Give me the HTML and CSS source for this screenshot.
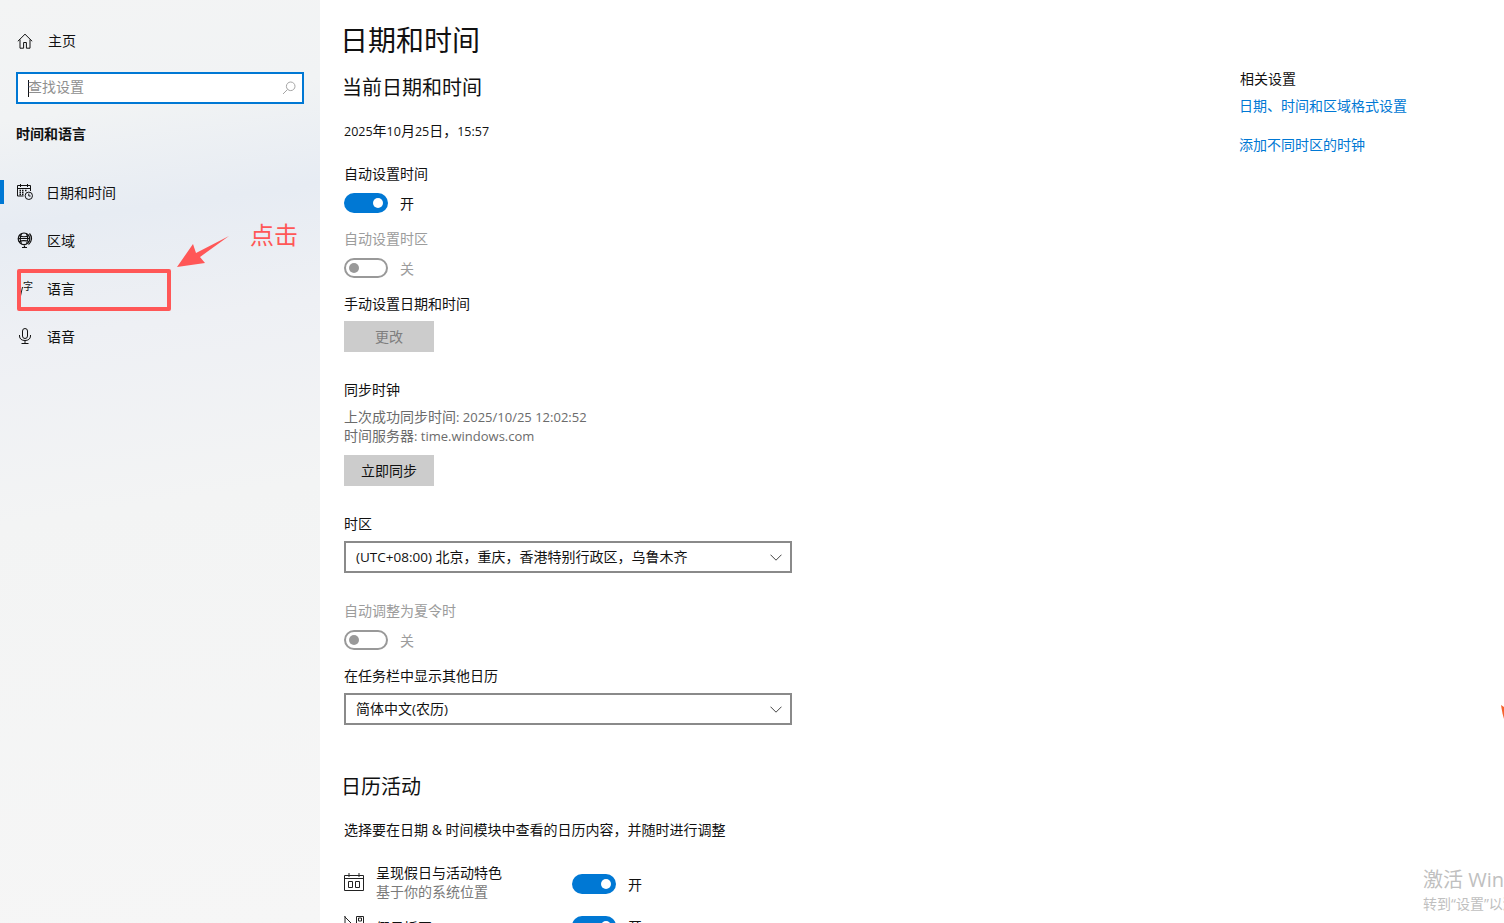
FILE: index.html
```html
<!DOCTYPE html>
<html lang="zh-CN">
<head>
    <meta charset="UTF-8">
    <title>日期和时间</title>
    <link rel="stylesheet" href="styles.css">
</head>
<body>
    <aside class="sidebar">
        <div class="home-row">
            <svg class="icon" viewBox="0 0 16 16"><path d="M.8 8.300 8 1.200l7.200 7.100M3 6.500v8.700h3.600V9.500h2.800v5.700H13V6.500"/></svg>
            <span>主页</span>
        </div>
        <div class="search">
            <span class="caret"></span>
            <span class="search-text">查找设置</span>
            <svg class="search-icon" viewBox="0 0 14 14"><circle cx="8.700" cy="5.300" r="4.300"/><path d="M5.600 8.400 1 13"/></svg>
        </div>
        <div class="group-title">时间和语言</div>
        <nav class="nav">
            <div class="nav-item active">
                <svg class="icon" viewBox="0 0 16 16"><path d="M3.500 0v3M10.500 0v3M.5 1.500h13V7M.5 1.500v10.500h6M.5 4.500h13"/><path d="M2.500 6.500h1.500M5 6.500h1.500M8 6.500h1.500M2.500 8.500h1.500M5 8.500h1.500M2.500 10.500h1.500M5 10.500h1.500" stroke-width="1.300"/><circle cx="11.800" cy="11.800" r="3.700" fill="#e8ecf3"/><path d="M11.800 9.600v2.400h1.800"/></svg>
                <span>日期和时间</span>
            </div>
            <div class="nav-item">
                <svg class="icon globe" viewBox="0 0 16 16"><circle cx="7" cy="6.800" r="5.800"/><path d="M2 3.500c3 1.500 7 1.500 10 0M1.700 9.500c3-1.200 7-1.200 10.600 0M4.500 1.800c-1.500 3-1.500 7 0 10M9.500 1.800c1.500 3 1.500 7 0 10M1.200 6.500h11.600"/><path d="M12.500 1.500c3 3.500 2.500 8-1 11M7.500 13.500v2M5 15.500h5"/></svg>
                <span>区域</span>
            </div>
            <div class="nav-item">
                <span class="lang-icon">字<svg class="lang-a" viewBox="0 0 3 9"><path d="M2.500 0 .5 9"/></svg></span>
                <span>语言</span>
            </div>
            <div class="nav-item">
                <svg class="icon" viewBox="0 0 16 16"><rect x="5.500" y=".5" width="5" height="10" rx="2.500"/><path d="M2.500 7v1c0 3 2.300 4.500 5.500 4.500s5.500-1.500 5.500-4.500V7M8 12.500v3M4.500 15.500h7"/></svg>
                <span>语音</span>
            </div>
        </nav>
    </aside>

    <main class="main">
        <div class="content">
            <h1 class="page-title">日期和时间</h1>
            <h2 class="section-title">当前日期和时间</h2>
            <p class="date-line"><span class="en">2025</span>年<span class="en">10</span>月<span class="en">25</span>日，<span class="en">15:57</span></p>

            <p class="label first">自动设置时间</p>
            <div class="toggle-row"><span class="toggle on"></span><span class="state">开</span></div>

            <p class="label off-text next">自动设置时区</p>
            <div class="toggle-row off-text"><span class="toggle off"></span><span class="state">关</span></div>

            <p class="label next">手动设置日期和时间</p>
            <button class="btn disabled">更改</button>

            <p class="label sync-title">同步时钟</p>
            <p class="sync-info">上次成功同步时间<span class="en">: 2025/10/25 12:02:52</span><br>时间服务器<span class="en">: time.windows.com</span></p>
            <button class="btn sync-btn">立即同步</button>

            <p class="label zone-title">时区</p>
            <div class="select">
                <span><span class="en wide">(UTC+08:00)</span> 北京，重庆，香港特别行政区，乌鲁木齐</span>
                <svg class="chevron" viewBox="0 0 12 7"><path d="M.5.7 6 6.200 11.500.7"/></svg>
            </div>

            <p class="label off-text dst-title">自动调整为夏令时</p>
            <div class="toggle-row off-text"><span class="toggle off"></span><span class="state">关</span></div>

            <p class="label next">在任务栏中显示其他日历</p>
            <div class="select">
                <span>简体中文<span class="en wide">(</span>农历<span class="en wide">)</span></span>
                <svg class="chevron" viewBox="0 0 12 7"><path d="M.5.7 6 6.200 11.500.7"/></svg>
            </div>

            <h2 class="section-title calendar-title">日历活动</h2>
            <p class="label calendar-desc">选择要在日期 &amp; 时间模块中查看的日历内容，并随时进行调整</p>

            <div class="cal-row">
                <svg class="cal-icon" viewBox="0 0 20 18"><path d="M.5 2.500h19v15H.5zM.5 5.500h19M5 0v4M15 0v4"/><path d="M4.500 8.500h4v6h-4zM11.500 8.500h4v6h-4z"/></svg>
                <div class="cal-text">
                    <div>呈现假日与活动特色</div>
                    <div class="cal-sub">基于你的系统位置</div>
                </div>
                <div class="toggle-row"><span class="toggle on"></span><span class="state">开</span></div>
            </div>
            <div class="cal-row second">
                <svg class="cal-icon" viewBox="0 0 20 18"><path d="M.5.5 9 9M1 0v9M12.500 8V.5h7v8"/><path d="M14.500 2h3v3h-3z"/></svg>
                <div class="cal-text">
                    <div>假日插图</div>
                </div>
                <div class="toggle-row"><span class="toggle on"></span><span class="state">开</span></div>
            </div>
        </div>

        <div class="related">
            <p class="related-title">相关设置</p>
            <a class="link">日期、时间和区域格式设置</a>
            <a class="link second-link">添加不同时区的时钟</a>
        </div>
    </main>

    <!-- 截图上的标注 -->
    <div class="mark-box"></div>
    <svg class="mark-arrow" viewBox="0 0 54 34"><path d="M1 32 17 9 20 18 53 1 24 22 29 28z"/></svg>
    <div class="mark-text">点击</div>

    <div class="watermark">
        <div class="wm-big">激活 Windows</div>
        <div class="wm-small">转到“设置”以激活 Windows。</div>
    </div>
    <div class="sliver"></div>
</body>
</html>
```

FILE: styles.css
```css
html, body {
    height: 100%;
}
body {
    margin: 0;
    height: 923px;
    overflow: hidden;
    display: flex;
    position: relative;
    background: #fff;
    color: #111;
    font-family: "Open Sans", "Noto Sans CJK SC", sans-serif;
    font-size: 14px;
    line-height: 20px;
}
p, h1, h2 {
    margin: 0;
    font-weight: 400;
}
.en {
    font-size: 12.5px;
    line-height: 1;
}
.en.wide {
    font-size: 13.500px;
}
.sync-info .en {
    font-size: 13px;
}

/* 左侧栏 */
.sidebar {
    width: 320px;
    flex: none;
    padding-top: 31px;
    box-sizing: border-box;
    background: linear-gradient(172deg, #f3f4f4 0, #f1f3f4 120px, #e7ecf3 225px, #eef0f4 340px, #f3f4f4 520px, #f6f6f6 100%);
}
.icon {
    width: 16px;
    height: 16px;
    flex: none;
    fill: none;
    stroke: #111;
    stroke-width: 1;
}
.globe {
    stroke-width: 1.200;
}
.home-row {
    display: flex;
    align-items: center;
    height: 20px;
    padding-left: 17px;
    gap: 15px;
}
.search {
    margin: 21px 16px 0;
    height: 32px;
    box-sizing: border-box;
    border: 2px solid #0078d4;
    background: #fff;
    display: flex;
    align-items: center;
    padding: 0 6px 0 10px;
}
.caret {
    width: 1px;
    height: 17px;
    background: #111;
    flex: none;
}
.search-text {
    color: #8f8f8f;
    margin: -2px 0 0 -1px;
}
.search-icon {
    width: 14px;
    height: 14px;
    margin-left: auto;
    fill: none;
    stroke: #a5a5a5;
}
.group-title {
    margin: 20px 0 0 16px;
    font-weight: 700;
}
.nav {
    margin-top: 24px;
}
.nav-item {
    height: 48px;
    display: flex;
    align-items: center;
    padding-left: 17px;
    gap: 14px;
    position: relative;
}
.nav-item span:last-child {
    margin-top: 2px;
}
.nav-item.active span:last-child {
    margin-left: -1px;
}
.nav-item.active::before {
    content: "";
    position: absolute;
    left: 0;
    top: 12px;
    width: 4px;
    height: 24px;
    background: #0078d4;
}
.lang-icon {
    width: 16px;
    font-size: 10px;
    line-height: 12px;
    text-align: right;
    margin-top: -4px;
    position: relative;
}
.lang-a {
    position: absolute;
    left: 3px;
    top: 7px;
    width: 3px;
    height: 9px;
    fill: none;
    stroke: #222;
}

/* 右侧内容 */
.main {
    flex: 1;
    display: flex;
    padding: 20px 0 0 24px;
}
.content {
    width: 896px;
    flex: none;
}
.page-title {
    font-size: 28px;
    line-height: 40px;
    margin-left: -4px;
}
.section-title {
    font-size: 20px;
    line-height: 28px;
    margin: 14px 0 0 -2px;
}
.date-line {
    margin-top: 19px;
}
.label {
    height: 20px;
    white-space: nowrap;
}
.first {
    margin-top: 23px;
}
.next {
    margin-top: 16px;
}
.off-text {
    color: #9c9c9c;
}
.toggle-row {
    display: flex;
    align-items: center;
    gap: 12px;
    height: 20px;
    margin-top: 9px;
}
.state {
    margin-top: 2px;
}
.toggle {
    width: 44px;
    height: 20px;
    box-sizing: border-box;
    border-radius: 10px;
    position: relative;
    flex: none;
}
.toggle::after {
    content: "";
    position: absolute;
    width: 10px;
    height: 10px;
    border-radius: 50%;
    top: 5px;
}
.toggle.on {
    background: #0078d4;
}
.toggle.on::after {
    background: #fff;
    right: 5px;
}
.toggle.off {
    border: 2px solid #999;
}
.toggle.off::after {
    background: #999;
    left: 3px;
    top: 3px;
}
.btn {
    display: block;
    width: 90px;
    height: 31px;
    margin-top: 7px;
    border: 0;
    padding: 0;
    background: #ccc;
    color: #111;
    font: inherit;
}
.btn.disabled {
    color: #7e7e7e;
}
.sync-title {
    margin-top: 28px;
}
.sync-info {
    margin-top: 7px;
    line-height: 19px;
    color: #6b6b6b;
}
.sync-btn {
    margin-top: 10px;
}
.zone-title {
    margin-top: 28px;
}
.select {
    width: 448px;
    height: 32px;
    margin-top: 7px;
    box-sizing: border-box;
    border: 2px solid #8a8a8a;
    background: #fff;
    display: flex;
    align-items: center;
    justify-content: space-between;
    padding: 0 8px 0 10px;
}
.chevron {
    width: 12px;
    height: 7px;
    fill: none;
    stroke: #444;
}
.dst-title {
    margin-top: 28px;
}
.calendar-title {
    margin-top: 48px;
    margin-left: -3px;
}
.calendar-desc {
    margin-top: 19px;
}
.cal-row {
    display: flex;
    align-items: center;
    margin-top: 23px;
    width: 320px;
}
.cal-row .toggle-row {
    margin: 4px 0 0;
}
.cal-icon {
    width: 20px;
    height: 18px;
    flex: none;
    fill: none;
    stroke: #222;
}
.cal-text {
    width: 196px;
    margin-left: 12px;
    line-height: 19px;
}
.cal-sub {
    color: #7a7a7a;
}
.cal-row.second {
    margin-top: 15px;
    align-items: flex-start;
}
.cal-row.second .cal-text {
    margin-top: 2px;
}
.cal-row.second .toggle-row {
    margin: 0;
}

/* 相关设置 */
.related {
    padding-top: 49px;
    white-space: nowrap;
}
.related-title {
    height: 20px;
}
.link {
    display: block;
    color: #0078d4;
    margin: 7px 0 0 -1px;
}
.second-link {
    margin-top: 19px;
}

/* 标注 */
.mark-box {
    position: absolute;
    left: 17px;
    top: 269px;
    width: 154px;
    height: 42px;
    box-sizing: border-box;
    border: 4px solid #ff5757;
    border-radius: 2px;
}
.mark-arrow {
    position: absolute;
    left: 176px;
    top: 235px;
    width: 54px;
    height: 34px;
    fill: #ff5757;
}
.mark-text {
    position: absolute;
    left: 250px;
    top: 219px;
    font-size: 24px;
    line-height: 32px;
    color: #ff5757;
}
.watermark {
    position: absolute;
    left: 1423px;
    top: 866px;
    width: 81px;
    overflow: hidden;
    white-space: nowrap;
    color: #c0c0c0;
}
.wm-big {
    font-size: 20px;
    line-height: 28px;
}
.wm-small {
    font-size: 14px;
    line-height: 20px;
}
.sliver {
    position: absolute;
    left: 1501px;
    top: 705px;
    width: 3px;
    height: 14px;
    background: #f5622d;
    clip-path: polygon(0 0, 100% 15%, 100% 100%, 50% 60%);
}
```
